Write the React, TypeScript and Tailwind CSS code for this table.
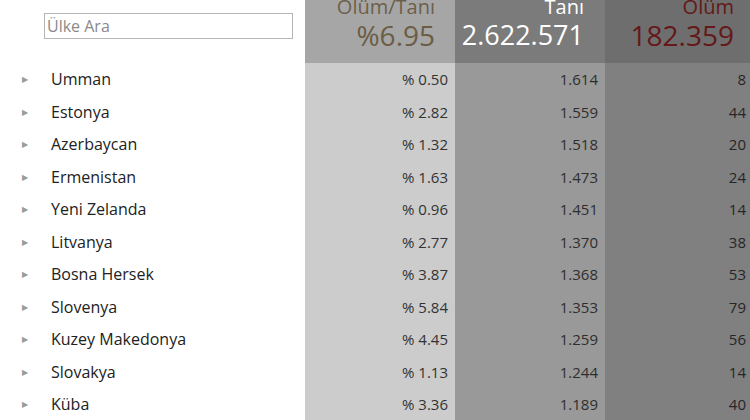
const rows = [
  { name: "Umman", rate: "% 0.50", cases: "1.614", deaths: "8" },
  { name: "Estonya", rate: "% 2.82", cases: "1.559", deaths: "44" },
  { name: "Azerbaycan", rate: "% 1.32", cases: "1.518", deaths: "20" },
  { name: "Ermenistan", rate: "% 1.63", cases: "1.473", deaths: "24" },
  { name: "Yeni Zelanda", rate: "% 0.96", cases: "1.451", deaths: "14" },
  { name: "Litvanya", rate: "% 2.77", cases: "1.370", deaths: "38" },
  { name: "Bosna Hersek", rate: "% 3.87", cases: "1.368", deaths: "53" },
  { name: "Slovenya", rate: "% 5.84", cases: "1.353", deaths: "79" },
  { name: "Kuzey Makedonya", rate: "% 4.45", cases: "1.259", deaths: "56" },
  { name: "Slovakya", rate: "% 1.13", cases: "1.244", deaths: "14" },
  { name: "Küba", rate: "% 3.36", cases: "1.189", deaths: "40" },
]

export default function App() {
  return (
    <div className="w-[750px] h-[420px] overflow-hidden bg-white flex font-['Open_Sans',sans-serif]">
      {/* country list */}
      <div className="w-[305px] shrink-0">
        <div className="h-[63px] pt-[13px] pl-[44px]">
          <input
            type="text"
            placeholder="Ülke Ara"
            className="w-[249px] h-[26px] border border-[#b5b5b5] px-[2px] text-[16px] text-[#333] placeholder:text-[#8a8a8a] outline-none"
          />
        </div>
        {rows.map((r) => (
          <div key={r.name} className="h-[32.5px] flex items-center">
            <span className="w-[51px] pl-[22px] text-[8px] text-[#9a9a9a]">▶</span>
            <span className="text-[16px] text-[#222]">{r.name}</span>
          </div>
        ))}
      </div>

      {/* rate column */}
      <div className="w-[150px] shrink-0 bg-[#cccccc]">
        <div className="h-[63px] bg-[#a6a6a6] pr-[20px] flex flex-col items-end">
          <span className="text-[20px] leading-[22px] text-[#6c604a] mt-[-4px]">Ölüm/Tanı</span>
          <span className="text-[28px] leading-[30px] text-[#6b5d44] mt-[2px]">%6.95</span>
        </div>
        {rows.map((r) => (
          <div key={r.name} className="h-[32.5px] flex items-center justify-end pr-[7px] text-[15px] text-[#333]">
            {r.rate}
          </div>
        ))}
      </div>

      {/* cases column */}
      <div className="w-[150px] shrink-0 bg-[#999999]">
        <div className="h-[63px] bg-[#7b7b7b] pr-[21px] flex flex-col items-end">
          <span className="text-[20px] leading-[22px] text-white mt-[-4px]">Tanı</span>
          <span className="text-[27px] leading-[30px] text-white mt-[2px]">2.622.571</span>
        </div>
        {rows.map((r) => (
          <div key={r.name} className="h-[32.5px] flex items-center justify-end pr-[7px] text-[15px] text-[#2e2e2e]">
            {r.cases}
          </div>
        ))}
      </div>

      {/* deaths column */}
      <div className="flex-1 bg-[#808080]">
        <div className="h-[63px] bg-[#6e6e6e] pr-[16px] flex flex-col items-end">
          <span className="text-[20px] leading-[22px] text-[#641818] mt-[-4px]">Ölüm</span>
          <span className="text-[28px] leading-[30px] text-[#641818] mt-[2px]">182.359</span>
        </div>
        {rows.map((r) => (
          <div key={r.name} className="h-[32.5px] flex items-center justify-end pr-[4px] text-[15px] text-[#262626]">
            {r.deaths}
          </div>
        ))}
      </div>
    </div>
  )
}
